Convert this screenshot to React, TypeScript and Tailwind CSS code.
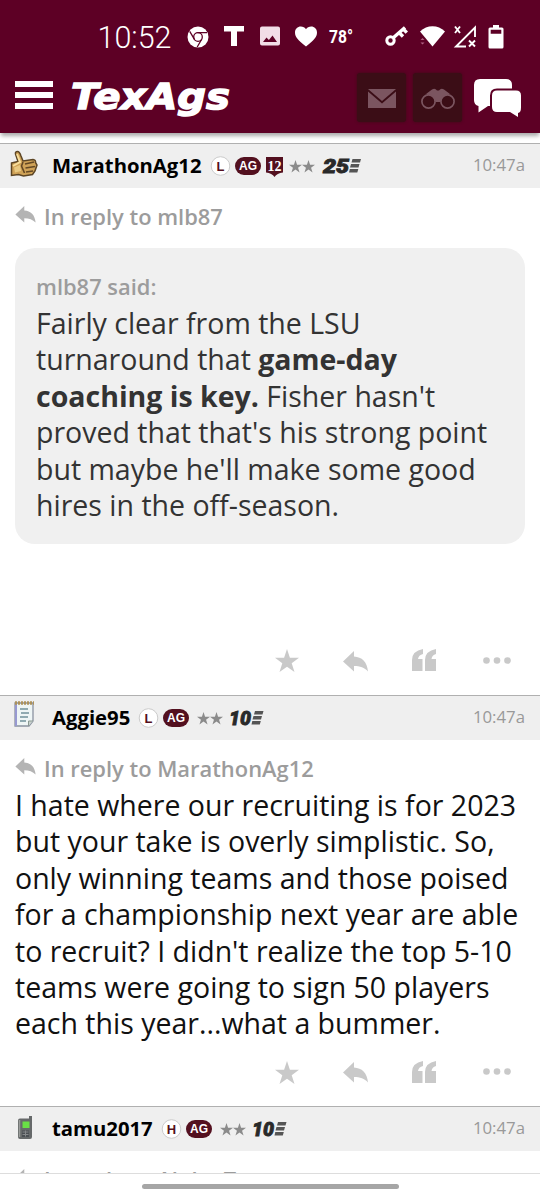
import type { ReactNode } from 'react'
import clsx from 'clsx'

type Post = {
  author: string
  avatar: ReactNode
  level: 'L' | 'H'
  twelfthMan?: boolean
  years: string
  time: string
}

function StatusBar() {
  return (
    <div className="flex h-[73px] items-center pl-[97px] text-white">
      <svg className="h-[40px] w-[76px] overflow-visible" viewBox="0 0 76 40">
        <text x="0.500" y="31" textLength="74" lengthAdjust="spacingAndGlyphs" fill="currentColor" className="font-['Roboto',sans-serif] text-[32px] font-light">10:52</text>
      </svg>
      <svg className="ml-[14px] size-[22px]" viewBox="0 0 22 22">
        <circle cx="11" cy="11" r="10.500" fill="currentColor" />
        <circle cx="11" cy="11" r="4.300" fill="none" stroke="#5d0025" strokeWidth="1.300" />
        <path d="M10.500 6.700H20M7.300 13.200 2.700 5.300M14.700 13.200 10.200 21" fill="none" stroke="#5d0025" strokeWidth="1.300" />
      </svg>
      <svg className="-mt-px ml-[15px] h-[20px] w-[20px]" viewBox="0 0 20 20">
        <path d="M0 0h20v5.500h-7V20H7V5.500H0z" fill="currentColor" />
      </svg>
      <svg className="-mt-px ml-[16px] size-[20px]" viewBox="0 0 20 20">
        <path fillRule="evenodd" d="M2 .5h16q2 0 2 2v15q0 2-2 2H2q-2 0-2-2v-15q0-2 2-2ZM3 16h14l-4.500-6.500-3.600 4.600L6.500 11.500Z" fill="#f2dde7" />
      </svg>
      <svg className="ml-[15px] h-[21px] w-[22px]" viewBox="0 0 22 21">
        <path d="M11 20.500C3 14 0 11 0 6.500 0 3 2.600.5 5.800.5 8 .5 9.900 1.500 11 3.300 12.100 1.500 14 .5 16.200.5 19.400.5 22 3 22 6.500 22 11 19 14 11 20.500Z" fill="currentColor" />
      </svg>
      <svg className="ml-[12px] h-[24px] w-[24px] overflow-visible" viewBox="0 0 24 24">
        <text x="0" y="17.800" textLength="24" lengthAdjust="spacingAndGlyphs" fill="currentColor" className="font-['Roboto',sans-serif] text-[18px] font-bold">78°</text>
      </svg>
      <svg className="-mt-px ml-[32px] h-[22px] w-[24px]" viewBox="0 0 24 22">
        <circle cx="5.500" cy="15.500" r="3.700" fill="none" stroke="currentColor" strokeWidth="3" />
        <path d="M8 13 20 2.500M14 7.500l4 4M18.200 4l3.600 3.600" fill="none" stroke="currentColor" strokeWidth="3.400" />
      </svg>
      <svg className="-mt-px ml-[9px] h-[22px] w-[27px]" viewBox="0 0 27 22">
        <path d="M2 6.500C9-.5 20-.5 27 6.500L14.500 21.500Z" fill="currentColor" />
        <path d="m2.500 15 2-2 2 2ZM2.500 17.500l2 2 2-2Z" fill="#b06284" />
      </svg>
      <svg className="-mt-px ml-[8px] h-[23px] w-[24px]" viewBox="0 0 24 23">
        <path d="M22 12V2.500L3 21.500H13M2 1.500l5 6.500M7 1.500 2 8M16 15.500l6 6M22 15.500l-6 6" fill="none" stroke="currentColor" strokeWidth="1.900" />
      </svg>
      <svg className="ml-[11px] h-[24px] w-[16px]" viewBox="0 0 16 24">
        <path fillRule="evenodd" d="M5 0h6v2.500h3q1.500 0 1.500 1.500v18q0 1.500-1.500 1.500H2Q.5 23.500.5 22V4Q.5 2.500 2 2.500h3ZM2.700 4.800v4h10.600v-4Z" fill="currentColor" />
      </svg>
    </div>
  )
}

function NavBar() {
  return (
    <div className="flex h-[60px] pl-[15px] text-white">
      <div className="mt-2 flex w-[38px] flex-col gap-[5px]">
        <div className="h-[6px] bg-white"></div>
        <div className="h-[6px] bg-white"></div>
        <div className="h-[6px] bg-white"></div>
      </div>
      <svg className="ml-[18px] h-[56px] w-[162px] overflow-visible" viewBox="0 0 162 56">
        <text x="0" y="36" textLength="159" lengthAdjust="spacingAndGlyphs" fill="currentColor" stroke="currentColor" strokeWidth="1.400" className="font-['DejaVu_Sans',sans-serif] text-[35px] font-bold italic">TexAgs</text>
      </svg>
      <div className="ml-[124px] flex size-[49px] items-center justify-center rounded-[3px] bg-[#3b0d16] shadow-[0_0_3px_#3b0d16]">
        <svg className="mt-px h-[19px] w-[28px]" viewBox="0 0 28 19">
          <path d="M0 0h28L14 12ZM0 2.500 14 14.500 28 2.500V19H0Z" fill="#7b5560" />
        </svg>
      </div>
      <div className="ml-[7px] flex size-[49px] items-center justify-center rounded-[3px] bg-[#3b0d16] shadow-[0_0_3px_#3b0d16]">
        <svg className="mt-[2px] h-[22px] w-[34px]" viewBox="0 0 34 22">
          <path d="M5 6 11 1.500q3-2 5 1h2q2-3 5-1L29 6 22 10l-3 4h-4l-3-4Z" fill="#7b5560" />
          <circle cx="7.500" cy="13.500" r="6.600" fill="#3b0d16" stroke="#7b5560" strokeWidth="1.700" />
          <circle cx="26.500" cy="13.500" r="6.600" fill="#3b0d16" stroke="#7b5560" strokeWidth="1.700" />
        </svg>
      </div>
      <svg className="ml-[11px] mt-[5px] h-[40px] w-[50px]" viewBox="0 0 50 40">
        <path d="M7 1h26q6 0 6 6v15q0 6-6 6H15L5.500 34.500V28Q1 27 1 22V7q0-6 6-6Z" fill="currentColor" />
        <path d="M24 12.500h19q5 0 5 5v12q0 5-3 5.500V39l-8-5H24q-5 0-5-5V17.500q0-5 5-5Z" fill="currentColor" stroke="#5d0025" strokeWidth="4" paintOrder="stroke" />
      </svg>
    </div>
  )
}

function ThumbIcon() {
  return (
    <svg className="h-[28px] w-[28px]" viewBox="0 0 28 28">
      <path d="M1.500 13 8 11.500 5.500 4Q5 1.500 7.500 1.500q2 0 3.500 4.500l2 5 10-1.500q3 .5 2.500 3l1.500 2.500-1 3-1 3-2.500 3.500-9 1.500-5-1.500-7 1Z" fill="#cfa257" stroke="#5c4525" strokeWidth="1.500" />
      <path d="m15 14 9-2M15.500 18l9.500-1.500M16 22l7-1M13 12l-1.500 4 3 7" fill="none" stroke="#644824" strokeWidth="1.600" />
      <path d="m7 4 3 8-7 4" fill="none" stroke="#f7de9c" strokeWidth="2" />
      <path d="M4 17.500 10 15l1 6-6 1.500Z" fill="#e9c981" />
    </svg>
  )
}

function NotepadIcon() {
  return (
    <svg className="mb-[4px] h-[28px] w-[28px]" viewBox="0 0 28 28">
      <path d="M5 3h18v18l-4 5H5Z" fill="#eef5f5" stroke="#8b92a0" strokeWidth="1.300" />
      <path d="M6 3v23" stroke="#9799d1" strokeWidth="2" />
      <path d="M5 3H24" stroke="#ad925c" strokeWidth="3.500" strokeDasharray="2 1" />
      <path d="M10 9h8M11 13h8M10 17h8M10 21h6" stroke="#72919a" strokeWidth="1.500" />
      <path d="M18.500 26v-5H23" fill="#c9d3ce" stroke="#8b9991" />
    </svg>
  )
}

function PhoneIcon() {
  return (
    <svg className="mt-[2px] h-[28px] w-[28px]" viewBox="0 0 28 28">
      <path d="M10 4.500h9V2h3v21q0 2-2 2H10q-2 0-2-2V6.500q0-2 2-2Z" fill="#66696a" />
      <path d="M9.500 6v17" stroke="#9b9d9b" strokeWidth="1.500" />
      <path d="M12.500 7.500h7v6.500h-7Z" fill="#69df45" />
      <path d="M12 16.500h7v6.500h-7Z" fill="#4b4f53" />
      <path d="M12.500 18h6M12.500 20.500h6M15.500 16.500v6" stroke="#85888a" />
    </svg>
  )
}

function StarShape({ className }: { className?: string }) {
  return (
    <svg className={className} viewBox="0 0 24 24">
      <path d="m12 0 2.900 8.800H24l-7.300 5.500L19.500 23 12 17.700 4.500 23l2.800-8.700L0 8.800h9.100Z" fill="currentColor" />
    </svg>
  )
}

function ReplyIcon({ className }: { className?: string }) {
  return (
    <svg className={className} viewBox="0 0 25 21">
      <path d="M0 10.500 11 0v5.500C19 6 24 10.500 25 20.500 21.500 16.500 17 15 11 15v5.500Z" fill="currentColor" />
    </svg>
  )
}

function PostHeader({ post }: { post: Post }) {
  return (
    <div className="flex h-[45px] shrink-0 items-center border-t border-[#b0b0b0] bg-[#efefef] pl-[10px] pr-[15px]">
      <div className="-mt-[4px] w-[42px]">{post.avatar}</div>
      <span className="-mt-px text-[20.300px] font-bold leading-none text-black">{post.author}</span>
      <svg className="ml-[8px] size-[20px] overflow-visible" viewBox="0 0 20 20">
        <circle cx="10.500" cy="10" r="9.300" fill="#fff" stroke="#ccc" />
        <text x="10.500" y="14.500" textAnchor="middle" fill="#551020" className="font-['Liberation_Sans',sans-serif] text-[13px] font-bold">{post.level}</text>
      </svg>
      <svg className="ml-[5px] h-[18px] w-[26px] overflow-visible" viewBox="0 0 26 18">
        <rect width="26" height="18" rx="9" fill="#53101f" />
        <text x="13" y="13.300" textAnchor="middle" fill="#fff" className="font-['Liberation_Sans',sans-serif] text-[12px] font-bold">AG</text>
      </svg>
      {post.twelfthMan && (
        <svg className="ml-[5px] mt-[2px] h-[20px] w-[17px] overflow-visible" viewBox="0 0 17 20">
          <path d="M0 0h17v15.500q-6 .5-8.500 4.500-2.500-4-8.500-4.500Z" fill="#53101f" />
          <text x="1.500" y="13.500" textLength="14" lengthAdjust="spacingAndGlyphs" fill="#fff" className="font-['Liberation_Serif',serif] text-[15px] font-bold">12</text>
        </svg>
      )}
      <div className={clsx('flex text-[#8b8b8b]', post.twelfthMan ? 'ml-[6px]' : 'ml-[8px]')}>
        <StarShape className="size-[13px]" />
        <StarShape className="size-[13px]" />
      </div>
      <svg className={clsx('ml-[7px] h-[16px] overflow-visible', post.years === '25' ? 'w-[39px]' : 'w-[34px]')} viewBox={post.years === '25' ? '0 0 39 16' : '0 0 34 16'}>
        <text x={post.years === '25' ? 1 : -1} y="15.200" textLength={post.years === '25' ? 26 : 22} lengthAdjust="spacingAndGlyphs" fill="#292929" stroke="#292929" strokeWidth="0.900" className="font-['Roboto',sans-serif] text-[20px] font-black italic">{post.years}</text>
        <g transform={post.years === '25' ? 'translate(27 0)' : 'translate(21.500 0)'} fill="#555">
          <path d="M3.500 1h8.500l-1 3.500H2.500ZM2 6h8.500l-1 3.500H1ZM.8 11h8.500l-1 3.500H0Z" />
        </g>
      </svg>
      <span className="-mt-px ml-auto text-[16.800px] leading-none text-[#999]">{post.time}</span>
    </div>
  )
}

function ReplyTo({ name }: { name: string }) {
  return (
    <div className="flex h-[32px] items-center text-[21.900px] font-semibold text-[#9c9c9c]">
      <ReplyIcon className="-mt-[6px] mr-[8px] h-[17px] w-[21px] text-[#b4b4b4]" />
      In reply to {name}
    </div>
  )
}

function PostActions() {
  return (
    <div className="flex h-[26px] items-center pl-[260px] text-[#c9c9c9]">
      <StarShape className="size-[24px]" />
      <ReplyIcon className="ml-[44px] h-[21px] w-[25px]" />
      <svg className="-mt-[2px] ml-[44px] h-[22px] w-[24px]" viewBox="0 0 24 22">
        <path d="M11 0v5Q6.500 6 6 10h4.500v12H0V11Q0 2 11 0ZM24 0v5Q20 6 19.500 10H24v12H13V11Q13 2 24 0Z" fill="currentColor" />
      </svg>
      <svg className="-mt-[2px] ml-[47px] h-[7px] w-[28px]" viewBox="0 0 28 7">
        <circle cx="3.500" cy="3.500" r="3.300" fill="currentColor" />
        <circle cx="14" cy="3.500" r="3.300" fill="currentColor" />
        <circle cx="24.500" cy="3.500" r="3.300" fill="currentColor" />
      </svg>
    </div>
  )
}

const posts: Post[] = [
  { author: 'MarathonAg12', avatar: <ThumbIcon />, level: 'L', twelfthMan: true, years: '25', time: '10:47a' },
  { author: 'Aggie95', avatar: <NotepadIcon />, level: 'L', years: '10', time: '10:47a' },
  { author: 'tamu2017', avatar: <PhoneIcon />, level: 'H', years: '10', time: '10:47a' },
]

export default function App() {
  return (
    <div className="flex h-[1200px] w-[540px] flex-col overflow-hidden bg-white font-['Open_Sans',sans-serif]">
      <header className="z-10 h-[133px] shrink-0 bg-[#5d0025] shadow-[0_4px_4px_-1px_#aaa]">
        <StatusBar />
        <NavBar />
      </header>

      <main className="flex h-[1041px] shrink-0 flex-col overflow-hidden border-b border-[#ddd] pt-[10px]">
        <article className="flex h-[552px] shrink-0 flex-col">
          <PostHeader post={posts[0]} />
          <div className="px-[15px] pt-[13px]">
            <ReplyTo name="mlb87" />
            <div className="mt-[15px] h-[296px] rounded-[20px] bg-[#f0f0f0] pl-[21px] pt-[23px]">
              <div className="text-[21.900px] font-semibold leading-[32px] text-[#9c9c9c]">mlb87 said:</div>
              <div className="mt-[2px] whitespace-nowrap text-[28.500px] leading-[36.400px] text-[#333]">
                Fairly clear from the LSU<br />
                turnaround that <b>game-day</b><br />
                <b>coaching is key.</b> Fisher hasn't<br />
                proved that that's his strong point<br />
                but maybe he'll make some good<br />
                hires in the off-season.
              </div>
            </div>
            <div className="mt-[104px]">
              <PostActions />
            </div>
          </div>
        </article>

        <article className="flex h-[411px] shrink-0 flex-col">
          <PostHeader post={posts[1]} />
          <div className="px-[15px] pt-[13px]">
            <ReplyTo name="MarathonAg12" />
            <div className="mt-[2px] whitespace-nowrap text-[28.500px] leading-[36.400px] text-[#111]">
              I hate where our recruiting is for 2023<br />
              but your take is overly simplistic. So,<br />
              only winning teams and those poised<br />
              for a championship next year are able<br />
              to recruit? I didn't realize the top 5-10<br />
              teams were going to sign 50 players<br />
              each this year...what a bummer.
            </div>
            <div className="mt-[18px]">
              <PostActions />
            </div>
          </div>
        </article>

        <article className="shrink-0">
          <PostHeader post={posts[2]} />
          <div className="px-[15px] pt-[13px]">
            <ReplyTo name="Alpha Texan" />
          </div>
        </article>
      </main>

      <div className="flex flex-1 justify-center pt-[10px]">
        <div className="h-[5px] w-[257px] rounded-full bg-[#a6a6a6]"></div>
      </div>
    </div>
  )
}
